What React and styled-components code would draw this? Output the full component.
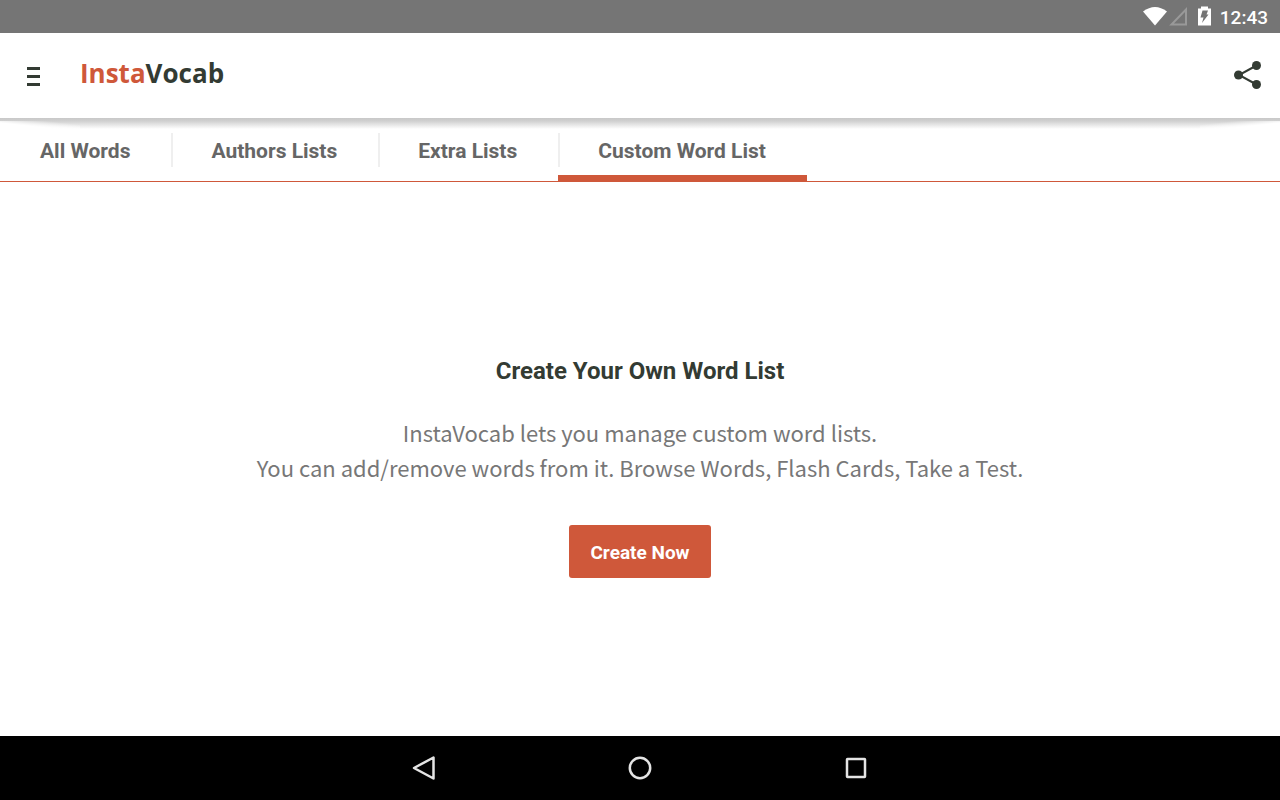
import React from 'react';
import styled, { createGlobalStyle } from 'styled-components';

const ACCENT = '#cf583a';
const INK = '#333b33';

const GlobalStyle = createGlobalStyle`
  * { box-sizing: border-box; }
  body { margin: 0; background: #fff; font-family: Roboto, sans-serif; }
  button { border: 0; padding: 0; background: none; font: inherit; color: inherit; cursor: pointer; }
  svg { display: block; }
`;

const Screen = styled.div`
  min-height: 100vh;
  display: flex;
  flex-direction: column;
`;

const StatusBar = styled.div`
  height: 33px;
  padding: 0 12px 0 0;
  display: flex;
  align-items: center;
  justify-content: flex-end;
  background: #757575;
  color: #fff;
`;

const StatusIcons = styled.svg`
  margin-right: 8px;
`;

const Clock = styled.time`
  font-size: 19px;
  line-height: 33px;
  font-weight: 500;
  padding-top: 2px;
`;

const Header = styled.header`
  height: 85px;
  padding: 0 16px 2px 24px;
  display: flex;
  align-items: center;
  color: ${INK};
`;

const IconButton = styled.button`
  display: grid;
  place-items: center;
  width: ${({ $width }) => $width}px;
  height: 48px;
`;

const Logo = styled.h1`
  margin: 0 auto 0 36px;
  padding-bottom: 4px;
  font-family: "Open Sans", sans-serif;
  font-size: 26px;
  line-height: 40px;
  font-weight: 700;

  span { color: ${ACCENT}; }
`;

const Tabs = styled.nav`
  height: 64px;
  display: flex;
  border-bottom: 1px solid ${ACCENT};
  background:
    linear-gradient(#c8c8c8, #d0d0d0) 0 0 / 100% 3px no-repeat,
    linear-gradient(to top right, #fff 40%, transparent 80%) 0 3px / 80px 9px no-repeat,
    linear-gradient(to top left, #fff 40%, transparent 80%) 100% 3px / 80px 9px no-repeat,
    linear-gradient(#c8c8c8, #d0d0d0 3px, #fff 11px);
`;

const Tab = styled.button`
  position: relative;
  padding: 3px 41px 0 40px;
  color: #666;
  font-size: 21px;
  line-height: 28px;
  font-weight: 700;

  & + &::before {
    content: '';
    position: absolute;
    left: 0;
    top: 15px;
    width: 2px;
    height: 34px;
    background: #efefef;
  }

  &[aria-current='page']::after {
    content: '';
    position: absolute;
    left: 0;
    right: 0;
    bottom: 0;
    height: 6px;
    background: ${ACCENT};
  }
`;

const Content = styled.main`
  flex: 1;
  display: flex;
  flex-direction: column;
  align-items: center;
  justify-content: center;
  padding: 16px 24px 0;
  text-align: center;
`;

const Title = styled.h2`
  margin: 0;
  color: ${INK};
  font-size: 24px;
  line-height: 28px;
  font-weight: 700;
`;

const Description = styled.p`
  margin: 30px 0 40px;
  color: #777;
  font-family: "Noto Sans CJK SC", sans-serif;
  font-size: 22px;
  line-height: 35px;
`;

const CreateButton = styled.button`
  height: 53px;
  padding: 2px 21px 0;
  border-radius: 3px;
  background: ${ACCENT};
  color: #fff;
  font-size: 19px;
  font-weight: 700;
`;

const NavigationBar = styled.nav`
  height: 64px;
  display: flex;
  align-items: center;
  justify-content: center;
  gap: 168px;
  background: #000;
  color: #e4e4e4;
`;

const TABS = ['All Words', 'Authors Lists', 'Extra Lists', 'Custom Word List'];

export default function App() {
  return (
    <Screen>
      <GlobalStyle />
      <StatusBar>
        <StatusIcons width="70" height="24" viewBox="0 0 70 24" aria-hidden="true">
          <path d="M1 6.500Q13 -2.500 25 6.500L13 20.500Z" fill="#fff" />
          <path d="M44 4.500V19.500H29.500Z" fill="none" stroke="#999" strokeWidth="2" />
          <path d="M59 1.500h7v2h3v17H56V3.500h3Z" fill="#fff" />
          <path d="M60.500 5.500H66L64.500 9.500H66.500L60 18L61.500 12.500H58.500Z" fill="#757575" />
        </StatusIcons>
        <Clock dateTime="12:43">12:43</Clock>
      </StatusBar>
      <Header>
        <IconButton type="button" aria-label="Menu" $width={20}>
          <svg width="14" height="22" viewBox="0 0 14 22">
            <path d="M0 4.500H13M0 12.500H13M0 20.500H13" stroke={INK} strokeWidth="3" />
          </svg>
        </IconButton>
        <Logo><span>Insta</span>Vocab</Logo>
        <IconButton type="button" aria-label="Share" $width={32}>
          <svg width="28" height="28" viewBox="0 0 28 28">
            <path d="M22.500 4.500L5 14L22.500 23.500" fill="none" stroke={INK} strokeWidth="2" />
            <circle cx="22.500" cy="4.500" r="4.500" fill={INK} />
            <circle cx="4.500" cy="14" r="4.500" fill={INK} />
            <circle cx="22.500" cy="23.500" r="4.500" fill={INK} />
          </svg>
        </IconButton>
      </Header>
      <Tabs aria-label="Word lists">
        {TABS.map((name) => (
          <Tab key={name} type="button" aria-current={name === 'Custom Word List' ? 'page' : undefined}>
            {name}
          </Tab>
        ))}
      </Tabs>
      <Content>
        <Title>Create Your Own Word List</Title>
        <Description>
          InstaVocab lets you manage custom word lists.
          <br />
          You can add/remove words from it. Browse Words, Flash Cards, Take a Test.
        </Description>
        <CreateButton type="button">Create Now</CreateButton>
      </Content>
      <NavigationBar aria-label="System navigation">
        <IconButton type="button" aria-label="Back" $width={48}>
          <svg width="28" height="28" viewBox="0 0 28 28">
            <path d="M23.500 3.500V24.500L4 14Z" fill="none" stroke="currentColor" strokeWidth="2.500" strokeLinejoin="round" />
          </svg>
        </IconButton>
        <IconButton type="button" aria-label="Home" $width={48}>
          <svg width="28" height="28" viewBox="0 0 28 28">
            <circle cx="14" cy="14" r="10.200" fill="none" stroke="currentColor" strokeWidth="2.500" />
          </svg>
        </IconButton>
        <IconButton type="button" aria-label="Recent apps" $width={48}>
          <svg width="28" height="28" viewBox="0 0 28 28">
            <rect x="5" y="5" width="18" height="18" rx="0.500" fill="none" stroke="currentColor" strokeWidth="2.500" />
          </svg>
        </IconButton>
      </NavigationBar>
    </Screen>
  );
}
